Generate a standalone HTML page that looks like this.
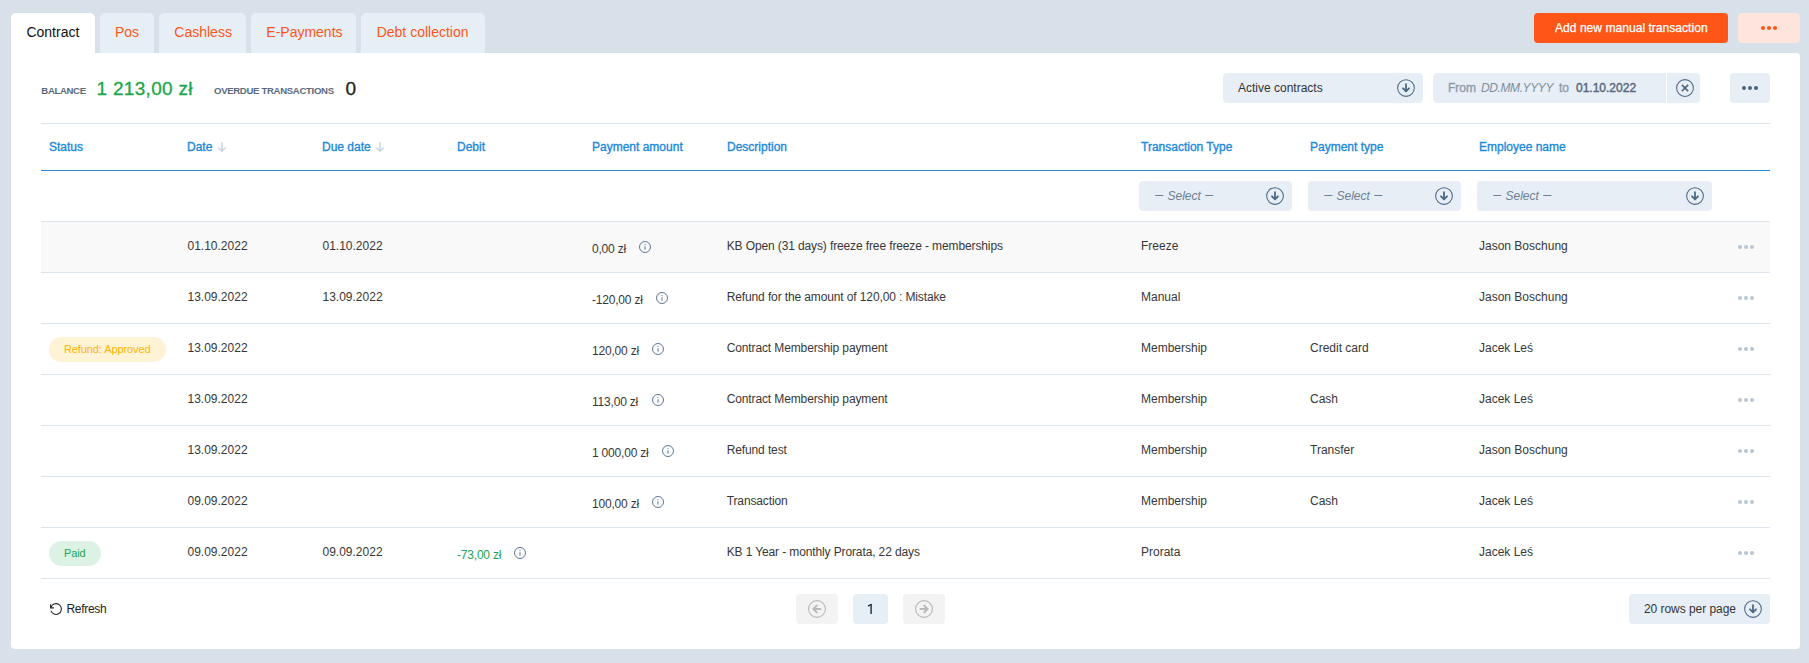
<!DOCTYPE html>
<html><head><meta charset="utf-8"><style>
html,body{margin:0;padding:0;}
body{width:1809px;height:663px;background:#d8e1ea;position:relative;overflow:hidden;font-family:"Liberation Sans", sans-serif;}
.t{position:absolute;white-space:nowrap;}
.r{position:absolute;}
.d{display:inline-block;transform:scaleX(1.2) translateY(-1px);font-style:normal;}
</style></head><body>
<div class="r" style="left:11px;top:13px;width:84px;height:47px;background:#fff;border-radius:5px 5px 0 0;"></div>
<div class="t" style="left:26.4px;top:24.65px;font-size:14px;line-height:14px;color:#111;font-weight:normal;font-style:normal;letter-spacing:0px;">Contract</div>
<div class="r" style="left:100px;top:13px;width:54px;height:40px;background:#e6eef6;border-radius:5px 5px 0 0;"></div>
<div class="t" style="left:115px;top:24.65px;font-size:14px;line-height:14px;color:#ff5516;font-weight:normal;font-style:normal;letter-spacing:0px;">Pos</div>
<div class="r" style="left:159px;top:13px;width:87px;height:40px;background:#e6eef6;border-radius:5px 5px 0 0;"></div>
<div class="t" style="left:174.3px;top:24.65px;font-size:14px;line-height:14px;color:#ff5516;font-weight:normal;font-style:normal;letter-spacing:0px;">Cashless</div>
<div class="r" style="left:251px;top:13px;width:105px;height:40px;background:#e6eef6;border-radius:5px 5px 0 0;"></div>
<div class="t" style="left:266.3px;top:24.65px;font-size:14px;line-height:14px;color:#ff5516;font-weight:normal;font-style:normal;letter-spacing:0px;">E-Payments</div>
<div class="r" style="left:361px;top:13px;width:124px;height:40px;background:#e6eef6;border-radius:5px 5px 0 0;"></div>
<div class="t" style="left:376.7px;top:24.65px;font-size:14px;line-height:14px;color:#ff5516;font-weight:normal;font-style:normal;letter-spacing:0px;">Debt collection</div>
<div class="r" style="left:1534px;top:13px;width:194px;height:30px;background:#ff5516;border-radius:4px;"></div>
<div class="t" style="left:1555px;top:21.96px;font-size:12.1px;line-height:12.1px;color:#fff;font-weight:normal;font-style:normal;letter-spacing:0px;-webkit-text-stroke:0.25px #fff;">Add new manual transaction</div>
<div class="r" style="left:1738px;top:13px;width:62px;height:30px;background:#fde5dd;border-radius:4px;"></div>
<div class="r" style="left:1761.0px;top:26.0px;width:4px;height:4px;border-radius:50%;background:#ff5516"></div><div class="r" style="left:1767.0px;top:26.0px;width:4px;height:4px;border-radius:50%;background:#ff5516"></div><div class="r" style="left:1773.0px;top:26.0px;width:4px;height:4px;border-radius:50%;background:#ff5516"></div>
<div class="r" style="left:11px;top:53px;width:1789px;height:596px;background:#fff;border-radius:0 4px 4px 4px;"></div>
<div class="t" style="left:41.3px;top:86.07px;font-size:9.6px;line-height:9.6px;color:#5b6b7b;font-weight:bold;font-style:normal;letter-spacing:-0.35px;">BALANCE</div>
<div class="t" style="left:96.5px;top:78.72px;font-size:19px;line-height:19px;color:#1ba64a;font-weight:normal;font-style:normal;letter-spacing:0.3px;-webkit-text-stroke:0.3px #1ba64a;">1 213,00 zł</div>
<div class="t" style="left:214px;top:86.07px;font-size:9.6px;line-height:9.6px;color:#5b6b7b;font-weight:bold;font-style:normal;letter-spacing:-0.33px;">OVERDUE TRANSACTIONS</div>
<div class="t" style="left:345.5px;top:78.72px;font-size:19px;line-height:19px;color:#222;font-weight:normal;font-style:normal;letter-spacing:0px;-webkit-text-stroke:0.3px #222;">0</div>
<div class="r" style="left:1223px;top:73px;width:200px;height:30px;background:#e7eef6;border-radius:4px;"></div>
<div class="t" style="left:1238px;top:81.84px;font-size:12px;line-height:12px;color:#333;font-weight:normal;font-style:normal;letter-spacing:0px;">Active contracts</div>
<svg class="r" style="left:1395.5px;top:78px" width="20" height="20" viewBox="0 0 20 20"><circle cx="10" cy="10" r="8.35" fill="none" stroke="#4d6885" stroke-width="1.05"/><path d="M10 6.2V13.2M7 10.3L10 13.3L13 10.3" fill="none" stroke="#4d6885" stroke-width="1.8" stroke-linecap="round" stroke-linejoin="round"/></svg>
<div class="r" style="left:1433px;top:73px;width:267px;height:30px;background:#e7eef6;border-radius:4px;"></div>
<div class="r" style="left:1666px;top:73px;width:1px;height:30px;background:#fff;border-radius:0;"></div>
<div class="t" style="left:1448px;top:81.84px;font-size:12px;line-height:12px;color:#8d9caa;font-weight:normal;font-style:normal;letter-spacing:0px;-webkit-text-stroke:0.35px #8d9caa;">From</div>
<div class="t" style="left:1481px;top:81.84px;font-size:12px;line-height:12px;color:#7f8e9c;font-weight:normal;font-style:italic;letter-spacing:-0.4px;">DD.MM.YYYY</div>
<div class="t" style="left:1559px;top:81.84px;font-size:12px;line-height:12px;color:#8d9caa;font-weight:normal;font-style:normal;letter-spacing:0px;-webkit-text-stroke:0.35px #8d9caa;">to</div>
<div class="t" style="left:1576px;top:81.84px;font-size:12px;line-height:12px;color:#56687a;font-weight:normal;font-style:normal;letter-spacing:0px;-webkit-text-stroke:0.4px #56687a;">01.10.2022</div>
<svg class="r" style="left:1675px;top:78px" width="20" height="20" viewBox="0 0 20 20"><circle cx="10" cy="10" r="8.4" fill="none" stroke="#4d6885" stroke-width="1.05"/><path d="M6.9 6.9L13.1 13.1M13.1 6.9L6.9 13.1" fill="none" stroke="#4d6885" stroke-width="1.7" stroke-linecap="butt"/></svg>
<div class="r" style="left:1730px;top:73px;width:40px;height:30px;background:#e7eef6;border-radius:4px;"></div>
<div class="r" style="left:1742.0px;top:86.0px;width:4px;height:4px;border-radius:50%;background:#4a627b"></div><div class="r" style="left:1748.0px;top:86.0px;width:4px;height:4px;border-radius:50%;background:#4a627b"></div><div class="r" style="left:1754.0px;top:86.0px;width:4px;height:4px;border-radius:50%;background:#4a627b"></div>
<div class="r" style="left:41px;top:123px;width:1729px;height:1px;background:#dbe3eb;border-radius:0;"></div>
<div class="t" style="left:49px;top:141.34px;font-size:12px;line-height:12px;color:#1c89db;font-weight:normal;font-style:normal;letter-spacing:0px;-webkit-text-stroke:0.35px #1c89db;">Status</div>
<div class="t" style="left:187px;top:141.34px;font-size:12px;line-height:12px;color:#1c89db;font-weight:normal;font-style:normal;letter-spacing:0px;-webkit-text-stroke:0.35px #1c89db;">Date</div>
<div class="t" style="left:322px;top:141.34px;font-size:12px;line-height:12px;color:#1c89db;font-weight:normal;font-style:normal;letter-spacing:0px;-webkit-text-stroke:0.35px #1c89db;">Due date</div>
<div class="t" style="left:457px;top:141.34px;font-size:12px;line-height:12px;color:#1c89db;font-weight:normal;font-style:normal;letter-spacing:0px;-webkit-text-stroke:0.35px #1c89db;">Debit</div>
<div class="t" style="left:592px;top:141.34px;font-size:12px;line-height:12px;color:#1c89db;font-weight:normal;font-style:normal;letter-spacing:0px;-webkit-text-stroke:0.35px #1c89db;">Payment amount</div>
<div class="t" style="left:727px;top:141.34px;font-size:12px;line-height:12px;color:#1c89db;font-weight:normal;font-style:normal;letter-spacing:0px;-webkit-text-stroke:0.35px #1c89db;">Description</div>
<div class="t" style="left:1141px;top:141.34px;font-size:12px;line-height:12px;color:#1c89db;font-weight:normal;font-style:normal;letter-spacing:0px;-webkit-text-stroke:0.35px #1c89db;">Transaction Type</div>
<div class="t" style="left:1310px;top:141.34px;font-size:12px;line-height:12px;color:#1c89db;font-weight:normal;font-style:normal;letter-spacing:0px;-webkit-text-stroke:0.35px #1c89db;">Payment type</div>
<div class="t" style="left:1479px;top:141.34px;font-size:12px;line-height:12px;color:#1c89db;font-weight:normal;font-style:normal;letter-spacing:0px;-webkit-text-stroke:0.35px #1c89db;">Employee name</div>
<svg class="r" style="left:217px;top:141px" width="10" height="12" viewBox="0 0 10 12"><path d="M5 1.5V10M1.8 7L5 10.2L8.2 7" fill="none" stroke="#ccd6e0" stroke-width="1.5" stroke-linecap="round" stroke-linejoin="round"/></svg>
<svg class="r" style="left:375px;top:141px" width="10" height="12" viewBox="0 0 10 12"><path d="M5 1.5V10M1.8 7L5 10.2L8.2 7" fill="none" stroke="#ccd6e0" stroke-width="1.5" stroke-linecap="round" stroke-linejoin="round"/></svg>
<div class="r" style="left:41px;top:170px;width:1729px;height:1px;background:#2a88cf;border-radius:0;"></div>
<div class="r" style="left:1139px;top:181px;width:153px;height:30px;background:#e7eef6;border-radius:4px;"></div>
<div class="t" style="left:1155.5px;top:190.04px;font-size:12px;line-height:12px;color:#6e8093;font-weight:normal;font-style:italic;letter-spacing:0px;"><span class="d" style="margin-right:2px">–</span>&nbsp;Select&nbsp;<span class="d" style="margin-left:1.5px">–</span></div>
<svg class="r" style="left:1265px;top:186px" width="20" height="20" viewBox="0 0 20 20"><circle cx="10" cy="10" r="8.35" fill="none" stroke="#4d6885" stroke-width="1.05"/><path d="M10 6.2V13.2M7 10.3L10 13.3L13 10.3" fill="none" stroke="#4d6885" stroke-width="1.8" stroke-linecap="round" stroke-linejoin="round"/></svg>
<div class="r" style="left:1308px;top:181px;width:153px;height:30px;background:#e7eef6;border-radius:4px;"></div>
<div class="t" style="left:1324.5px;top:190.04px;font-size:12px;line-height:12px;color:#6e8093;font-weight:normal;font-style:italic;letter-spacing:0px;"><span class="d" style="margin-right:2px">–</span>&nbsp;Select&nbsp;<span class="d" style="margin-left:1.5px">–</span></div>
<svg class="r" style="left:1434px;top:186px" width="20" height="20" viewBox="0 0 20 20"><circle cx="10" cy="10" r="8.35" fill="none" stroke="#4d6885" stroke-width="1.05"/><path d="M10 6.2V13.2M7 10.3L10 13.3L13 10.3" fill="none" stroke="#4d6885" stroke-width="1.8" stroke-linecap="round" stroke-linejoin="round"/></svg>
<div class="r" style="left:1477px;top:181px;width:235px;height:30px;background:#e7eef6;border-radius:4px;"></div>
<div class="t" style="left:1493.5px;top:190.04px;font-size:12px;line-height:12px;color:#6e8093;font-weight:normal;font-style:italic;letter-spacing:0px;"><span class="d" style="margin-right:2px">–</span>&nbsp;Select&nbsp;<span class="d" style="margin-left:1.5px">–</span></div>
<svg class="r" style="left:1685px;top:186px" width="20" height="20" viewBox="0 0 20 20"><circle cx="10" cy="10" r="8.35" fill="none" stroke="#4d6885" stroke-width="1.05"/><path d="M10 6.2V13.2M7 10.3L10 13.3L13 10.3" fill="none" stroke="#4d6885" stroke-width="1.8" stroke-linecap="round" stroke-linejoin="round"/></svg>
<div class="r" style="left:41px;top:221px;width:1729px;height:1px;background:#dce5ee;border-radius:0;"></div>
<div class="r" style="left:41px;top:222px;width:1729px;height:50px;background:#f9f9f9;border-radius:0;"></div>
<div class="r" style="left:41px;top:272px;width:1729px;height:1px;background:#dce5ee;border-radius:0;"></div>
<div class="t" style="left:187.5px;top:239.84px;font-size:12px;line-height:12px;color:#373737;font-weight:normal;font-style:normal;letter-spacing:0px;">01.10.2022</div>
<div class="t" style="left:322.5px;top:239.84px;font-size:12px;line-height:12px;color:#373737;font-weight:normal;font-style:normal;letter-spacing:0px;">01.10.2022</div>
<div class="t" style="left:592px;top:242.84px;font-size:12px;line-height:12px;color:#373737;font-weight:normal;font-style:normal;letter-spacing:-0.2px;">0,00 zł</div>
<svg class="r" style="left:637.2px;top:239.2px" width="16" height="16" viewBox="0 0 16 16"><circle cx="8" cy="8" r="5.5" fill="none" stroke="#55718d" stroke-width="0.95"/><path d="M8 7.3V10.6" stroke="#55718d" stroke-width="1"/><circle cx="8" cy="5.6" r="0.55" fill="#55718d"/></svg>
<div class="t" style="left:726.7px;top:239.84px;font-size:12px;line-height:12px;color:#373737;font-weight:normal;font-style:normal;letter-spacing:-0.12px;">KB Open (31 days) freeze free freeze - memberships</div>
<div class="t" style="left:1141px;top:239.84px;font-size:12px;line-height:12px;color:#373737;font-weight:normal;font-style:normal;letter-spacing:0px;">Freeze</div>
<div class="t" style="left:1479px;top:239.84px;font-size:12px;line-height:12px;color:#373737;font-weight:normal;font-style:normal;letter-spacing:0px;">Jason Boschung</div>
<div class="r" style="left:1738.0px;top:245.0px;width:4px;height:4px;border-radius:50%;background:#b9c6d3"></div><div class="r" style="left:1744.0px;top:245.0px;width:4px;height:4px;border-radius:50%;background:#b9c6d3"></div><div class="r" style="left:1750.0px;top:245.0px;width:4px;height:4px;border-radius:50%;background:#b9c6d3"></div>
<div class="r" style="left:41px;top:323px;width:1729px;height:1px;background:#dce5ee;border-radius:0;"></div>
<div class="t" style="left:187.5px;top:290.84px;font-size:12px;line-height:12px;color:#373737;font-weight:normal;font-style:normal;letter-spacing:0px;">13.09.2022</div>
<div class="t" style="left:322.5px;top:290.84px;font-size:12px;line-height:12px;color:#373737;font-weight:normal;font-style:normal;letter-spacing:0px;">13.09.2022</div>
<div class="t" style="left:592px;top:293.84px;font-size:12px;line-height:12px;color:#373737;font-weight:normal;font-style:normal;letter-spacing:-0.2px;">-120,00 zł</div>
<svg class="r" style="left:654.2px;top:290.2px" width="16" height="16" viewBox="0 0 16 16"><circle cx="8" cy="8" r="5.5" fill="none" stroke="#55718d" stroke-width="0.95"/><path d="M8 7.3V10.6" stroke="#55718d" stroke-width="1"/><circle cx="8" cy="5.6" r="0.55" fill="#55718d"/></svg>
<div class="t" style="left:726.7px;top:290.84px;font-size:12px;line-height:12px;color:#373737;font-weight:normal;font-style:normal;letter-spacing:-0.12px;">Refund for the amount of 120,00 : Mistake</div>
<div class="t" style="left:1141px;top:290.84px;font-size:12px;line-height:12px;color:#373737;font-weight:normal;font-style:normal;letter-spacing:0px;">Manual</div>
<div class="t" style="left:1479px;top:290.84px;font-size:12px;line-height:12px;color:#373737;font-weight:normal;font-style:normal;letter-spacing:0px;">Jason Boschung</div>
<div class="r" style="left:1738.0px;top:296.0px;width:4px;height:4px;border-radius:50%;background:#b9c6d3"></div><div class="r" style="left:1744.0px;top:296.0px;width:4px;height:4px;border-radius:50%;background:#b9c6d3"></div><div class="r" style="left:1750.0px;top:296.0px;width:4px;height:4px;border-radius:50%;background:#b9c6d3"></div>
<div class="r" style="left:41px;top:374px;width:1729px;height:1px;background:#dce5ee;border-radius:0;"></div>
<div class="r" style="left:49px;top:337px;width:117px;height:25px;background:#fff3d6;border-radius:13px;"></div>
<div class="t" style="left:64px;top:344.29px;font-size:11px;line-height:11px;color:#ffb300;font-weight:normal;font-style:normal;letter-spacing:-0.1px;">Refund: Approved</div>
<div class="t" style="left:187.5px;top:341.84px;font-size:12px;line-height:12px;color:#373737;font-weight:normal;font-style:normal;letter-spacing:0px;">13.09.2022</div>
<div class="t" style="left:592px;top:344.84px;font-size:12px;line-height:12px;color:#373737;font-weight:normal;font-style:normal;letter-spacing:-0.2px;">120,00 zł</div>
<svg class="r" style="left:650.2px;top:341.2px" width="16" height="16" viewBox="0 0 16 16"><circle cx="8" cy="8" r="5.5" fill="none" stroke="#55718d" stroke-width="0.95"/><path d="M8 7.3V10.6" stroke="#55718d" stroke-width="1"/><circle cx="8" cy="5.6" r="0.55" fill="#55718d"/></svg>
<div class="t" style="left:726.7px;top:341.84px;font-size:12px;line-height:12px;color:#373737;font-weight:normal;font-style:normal;letter-spacing:-0.12px;">Contract Membership payment</div>
<div class="t" style="left:1141px;top:341.84px;font-size:12px;line-height:12px;color:#373737;font-weight:normal;font-style:normal;letter-spacing:0px;">Membership</div>
<div class="t" style="left:1310px;top:341.84px;font-size:12px;line-height:12px;color:#373737;font-weight:normal;font-style:normal;letter-spacing:0px;">Credit card</div>
<div class="t" style="left:1479px;top:341.84px;font-size:12px;line-height:12px;color:#373737;font-weight:normal;font-style:normal;letter-spacing:0px;">Jacek Leś</div>
<div class="r" style="left:1738.0px;top:347.0px;width:4px;height:4px;border-radius:50%;background:#b9c6d3"></div><div class="r" style="left:1744.0px;top:347.0px;width:4px;height:4px;border-radius:50%;background:#b9c6d3"></div><div class="r" style="left:1750.0px;top:347.0px;width:4px;height:4px;border-radius:50%;background:#b9c6d3"></div>
<div class="r" style="left:41px;top:425px;width:1729px;height:1px;background:#dce5ee;border-radius:0;"></div>
<div class="t" style="left:187.5px;top:392.84px;font-size:12px;line-height:12px;color:#373737;font-weight:normal;font-style:normal;letter-spacing:0px;">13.09.2022</div>
<div class="t" style="left:592px;top:395.84px;font-size:12px;line-height:12px;color:#373737;font-weight:normal;font-style:normal;letter-spacing:-0.2px;">113,00 zł</div>
<svg class="r" style="left:650.2px;top:392.2px" width="16" height="16" viewBox="0 0 16 16"><circle cx="8" cy="8" r="5.5" fill="none" stroke="#55718d" stroke-width="0.95"/><path d="M8 7.3V10.6" stroke="#55718d" stroke-width="1"/><circle cx="8" cy="5.6" r="0.55" fill="#55718d"/></svg>
<div class="t" style="left:726.7px;top:392.84px;font-size:12px;line-height:12px;color:#373737;font-weight:normal;font-style:normal;letter-spacing:-0.12px;">Contract Membership payment</div>
<div class="t" style="left:1141px;top:392.84px;font-size:12px;line-height:12px;color:#373737;font-weight:normal;font-style:normal;letter-spacing:0px;">Membership</div>
<div class="t" style="left:1310px;top:392.84px;font-size:12px;line-height:12px;color:#373737;font-weight:normal;font-style:normal;letter-spacing:0px;">Cash</div>
<div class="t" style="left:1479px;top:392.84px;font-size:12px;line-height:12px;color:#373737;font-weight:normal;font-style:normal;letter-spacing:0px;">Jacek Leś</div>
<div class="r" style="left:1738.0px;top:398.0px;width:4px;height:4px;border-radius:50%;background:#b9c6d3"></div><div class="r" style="left:1744.0px;top:398.0px;width:4px;height:4px;border-radius:50%;background:#b9c6d3"></div><div class="r" style="left:1750.0px;top:398.0px;width:4px;height:4px;border-radius:50%;background:#b9c6d3"></div>
<div class="r" style="left:41px;top:476px;width:1729px;height:1px;background:#dce5ee;border-radius:0;"></div>
<div class="t" style="left:187.5px;top:443.84px;font-size:12px;line-height:12px;color:#373737;font-weight:normal;font-style:normal;letter-spacing:0px;">13.09.2022</div>
<div class="t" style="left:592px;top:446.84px;font-size:12px;line-height:12px;color:#373737;font-weight:normal;font-style:normal;letter-spacing:-0.2px;">1 000,00 zł</div>
<svg class="r" style="left:660.2px;top:443.2px" width="16" height="16" viewBox="0 0 16 16"><circle cx="8" cy="8" r="5.5" fill="none" stroke="#55718d" stroke-width="0.95"/><path d="M8 7.3V10.6" stroke="#55718d" stroke-width="1"/><circle cx="8" cy="5.6" r="0.55" fill="#55718d"/></svg>
<div class="t" style="left:726.7px;top:443.84px;font-size:12px;line-height:12px;color:#373737;font-weight:normal;font-style:normal;letter-spacing:-0.12px;">Refund test</div>
<div class="t" style="left:1141px;top:443.84px;font-size:12px;line-height:12px;color:#373737;font-weight:normal;font-style:normal;letter-spacing:0px;">Membership</div>
<div class="t" style="left:1310px;top:443.84px;font-size:12px;line-height:12px;color:#373737;font-weight:normal;font-style:normal;letter-spacing:0px;">Transfer</div>
<div class="t" style="left:1479px;top:443.84px;font-size:12px;line-height:12px;color:#373737;font-weight:normal;font-style:normal;letter-spacing:0px;">Jason Boschung</div>
<div class="r" style="left:1738.0px;top:449.0px;width:4px;height:4px;border-radius:50%;background:#b9c6d3"></div><div class="r" style="left:1744.0px;top:449.0px;width:4px;height:4px;border-radius:50%;background:#b9c6d3"></div><div class="r" style="left:1750.0px;top:449.0px;width:4px;height:4px;border-radius:50%;background:#b9c6d3"></div>
<div class="r" style="left:41px;top:527px;width:1729px;height:1px;background:#dce5ee;border-radius:0;"></div>
<div class="t" style="left:187.5px;top:494.84px;font-size:12px;line-height:12px;color:#373737;font-weight:normal;font-style:normal;letter-spacing:0px;">09.09.2022</div>
<div class="t" style="left:592px;top:497.84px;font-size:12px;line-height:12px;color:#373737;font-weight:normal;font-style:normal;letter-spacing:-0.2px;">100,00 zł</div>
<svg class="r" style="left:650.2px;top:494.2px" width="16" height="16" viewBox="0 0 16 16"><circle cx="8" cy="8" r="5.5" fill="none" stroke="#55718d" stroke-width="0.95"/><path d="M8 7.3V10.6" stroke="#55718d" stroke-width="1"/><circle cx="8" cy="5.6" r="0.55" fill="#55718d"/></svg>
<div class="t" style="left:726.7px;top:494.84px;font-size:12px;line-height:12px;color:#373737;font-weight:normal;font-style:normal;letter-spacing:-0.12px;">Transaction</div>
<div class="t" style="left:1141px;top:494.84px;font-size:12px;line-height:12px;color:#373737;font-weight:normal;font-style:normal;letter-spacing:0px;">Membership</div>
<div class="t" style="left:1310px;top:494.84px;font-size:12px;line-height:12px;color:#373737;font-weight:normal;font-style:normal;letter-spacing:0px;">Cash</div>
<div class="t" style="left:1479px;top:494.84px;font-size:12px;line-height:12px;color:#373737;font-weight:normal;font-style:normal;letter-spacing:0px;">Jacek Leś</div>
<div class="r" style="left:1738.0px;top:500.0px;width:4px;height:4px;border-radius:50%;background:#b9c6d3"></div><div class="r" style="left:1744.0px;top:500.0px;width:4px;height:4px;border-radius:50%;background:#b9c6d3"></div><div class="r" style="left:1750.0px;top:500.0px;width:4px;height:4px;border-radius:50%;background:#b9c6d3"></div>
<div class="r" style="left:41px;top:578px;width:1729px;height:1px;background:#dce5ee;border-radius:0;"></div>
<div class="r" style="left:49px;top:541px;width:52px;height:25px;background:#dcf2e4;border-radius:13px;"></div>
<div class="t" style="left:64px;top:548.29px;font-size:11px;line-height:11px;color:#21a455;font-weight:normal;font-style:normal;letter-spacing:-0.1px;">Paid</div>
<div class="t" style="left:187.5px;top:545.84px;font-size:12px;line-height:12px;color:#373737;font-weight:normal;font-style:normal;letter-spacing:0px;">09.09.2022</div>
<div class="t" style="left:322.5px;top:545.84px;font-size:12px;line-height:12px;color:#373737;font-weight:normal;font-style:normal;letter-spacing:0px;">09.09.2022</div>
<div class="t" style="left:457px;top:548.84px;font-size:12px;line-height:12px;color:#21a455;font-weight:normal;font-style:normal;letter-spacing:-0.2px;">-73,00 zł</div>
<svg class="r" style="left:512.2px;top:545.2px" width="16" height="16" viewBox="0 0 16 16"><circle cx="8" cy="8" r="5.5" fill="none" stroke="#55718d" stroke-width="0.95"/><path d="M8 7.3V10.6" stroke="#55718d" stroke-width="1"/><circle cx="8" cy="5.6" r="0.55" fill="#55718d"/></svg>
<div class="t" style="left:726.7px;top:545.84px;font-size:12px;line-height:12px;color:#373737;font-weight:normal;font-style:normal;letter-spacing:-0.12px;">KB 1 Year - monthly Prorata, 22 days</div>
<div class="t" style="left:1141px;top:545.84px;font-size:12px;line-height:12px;color:#373737;font-weight:normal;font-style:normal;letter-spacing:0px;">Prorata</div>
<div class="t" style="left:1479px;top:545.84px;font-size:12px;line-height:12px;color:#373737;font-weight:normal;font-style:normal;letter-spacing:0px;">Jacek Leś</div>
<div class="r" style="left:1738.0px;top:551.0px;width:4px;height:4px;border-radius:50%;background:#b9c6d3"></div><div class="r" style="left:1744.0px;top:551.0px;width:4px;height:4px;border-radius:50%;background:#b9c6d3"></div><div class="r" style="left:1750.0px;top:551.0px;width:4px;height:4px;border-radius:50%;background:#b9c6d3"></div>
<svg class="r" style="left:48px;top:601px" width="16" height="16" viewBox="0 0 16 16"><path d="M2.9 6.4L4.2 4.2A5.4 5.4 0 1 1 2.95 9.9" fill="none" stroke="#222" stroke-width="1.05"/><path d="M2.6 3.3V6.9H5.9" fill="none" stroke="#222" stroke-width="1.1"/></svg>
<div class="t" style="left:66.5px;top:602.84px;font-size:12px;line-height:12px;color:#222;font-weight:normal;font-style:normal;letter-spacing:-0.3px;">Refresh</div>
<div class="r" style="left:796px;top:594px;width:42px;height:30px;background:#f3f3f3;border-radius:4px;"></div>
<svg class="r" style="left:807px;top:599px" width="20" height="20" viewBox="0 0 20 20"><circle cx="10" cy="10" r="8.4" fill="none" stroke="#b9b9b9" stroke-width="1.1"/><path d="M13.5 10H6.5M9.8 6.6L6.4 10L9.8 13.4" fill="none" stroke="#b9b9b9" stroke-width="2" stroke-linecap="round" stroke-linejoin="round"/></svg>
<div class="r" style="left:853px;top:594px;width:35px;height:30px;background:#e6eef6;border-radius:4px;"></div>
<svg class="r" style="left:865px;top:602px" width="10" height="14" viewBox="0 0 10 14"><path d="M6.1 2V12" stroke="#1f2a35" stroke-width="1.4"/><path d="M6.4 2.3L3 4.1" stroke="#1f2a35" stroke-width="1.2"/></svg>
<div class="r" style="left:903px;top:594px;width:42px;height:30px;background:#f3f3f3;border-radius:4px;"></div>
<svg class="r" style="left:914px;top:599px" width="20" height="20" viewBox="0 0 20 20"><circle cx="10" cy="10" r="8.4" fill="none" stroke="#b9b9b9" stroke-width="1.1"/><path d="M6.5 10H13.5M10.2 6.6L13.6 10L10.2 13.4" fill="none" stroke="#b9b9b9" stroke-width="2" stroke-linecap="round" stroke-linejoin="round"/></svg>
<div class="r" style="left:1629px;top:594px;width:141px;height:30px;background:#e7eef6;border-radius:4px;"></div>
<div class="t" style="left:1644px;top:602.84px;font-size:12px;line-height:12px;color:#333;font-weight:normal;font-style:normal;letter-spacing:-0.05px;">20 rows per page</div>
<svg class="r" style="left:1743px;top:599px" width="20" height="20" viewBox="0 0 20 20"><circle cx="10" cy="10" r="8.35" fill="none" stroke="#4d6885" stroke-width="1.05"/><path d="M10 6.2V13.2M7 10.3L10 13.3L13 10.3" fill="none" stroke="#4d6885" stroke-width="1.8" stroke-linecap="round" stroke-linejoin="round"/></svg>

</body></html>
